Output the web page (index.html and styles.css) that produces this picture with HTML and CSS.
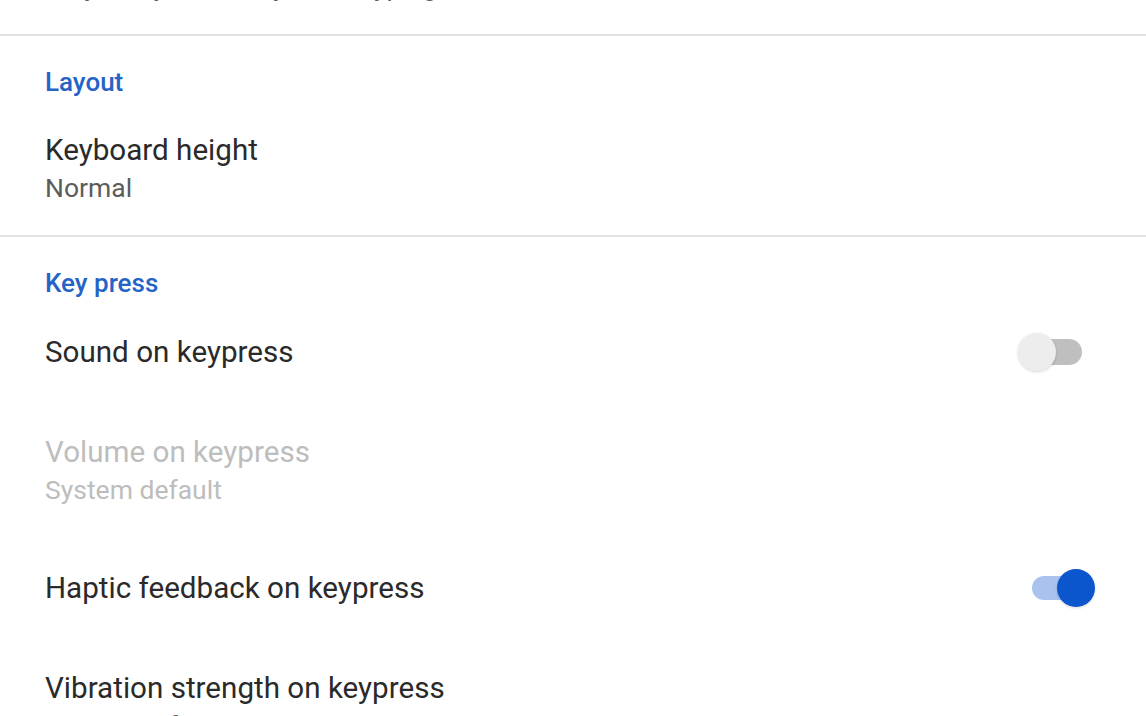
FILE: index.html
```html
<!DOCTYPE html>
<html lang="en">
<head>
<meta charset="utf-8">
<title>Preferences</title>
<link rel="stylesheet" href="styles.css">
</head>
<body>
<div class="screen">
  <div class="item two-line">
    <div class="texts">
      <div class="title">Voice input key</div>
      <div class="summary">Only on symbols keyboard, typing</div>
    </div>
  </div>
  <div class="divider"></div>

  <div class="header">Layout</div>
  <div class="item two-line">
    <div class="texts">
      <div class="title">Keyboard height</div>
      <div class="summary">Normal</div>
    </div>
  </div>
  <div class="divider"></div>

  <div class="header">Key press</div>
  <div class="item">
    <div class="texts">
      <div class="title">Sound on keypress</div>
    </div>
    <div class="switch switch-off"><span class="track"></span><span class="thumb"></span></div>
  </div>
  <div class="item two-line disabled">
    <div class="texts">
      <div class="title">Volume on keypress</div>
      <div class="summary">System default</div>
    </div>
  </div>
  <div class="item">
    <div class="texts">
      <div class="title">Haptic feedback on keypress</div>
    </div>
    <div class="switch switch-on"><span class="track"></span><span class="thumb"></span></div>
  </div>
  <div class="item two-line">
    <div class="texts">
      <div class="title">Vibration strength on keypress</div>
      <div class="summary">System default</div>
    </div>
  </div>
</div>
</body>
</html>
```

FILE: styles.css
```css
html, body {
  margin: 0;
  padding: 0;
  background: #ffffff;
  overflow: hidden;
}

body {
  font-family: Roboto, "Noto Sans", "Liberation Sans", sans-serif;
  width: 1146px;
  height: 716px;
}

.screen {
  display: flex;
  flex-direction: column;
  margin-top: -101px;
}

.divider {
  height: 2px;
  background: #e3e3e3;
  flex: none;
}

.header {
  padding: 28px 0 0 45px;
  font-size: 26px;
  line-height: 36px;
  font-weight: 500;
  color: #2563c7;
}

.item {
  display: flex;
  align-items: center;
  padding: 32px 0 31px 45px;
}

.item.two-line {
  padding-bottom: 29px;
}

.texts {
  flex: 1;
  display: flex;
  flex-direction: column;
  gap: 2px;
}

.title {
  font-size: 29.6px;
  line-height: 36px;
  color: #2a2a2a;
}

.summary {
  font-size: 26.5px;
  line-height: 36px;
  color: #5c5c5c;
}

.disabled .title,
.disabled .summary {
  color: #bdbdbd;
}

.switch {
  position: relative;
  height: 38px;
  flex: none;
}

.switch .track {
  position: absolute;
  border-radius: 13px;
}

.switch .thumb {
  position: absolute;
  top: 0;
  width: 38px;
  height: 38px;
  border-radius: 50%;
}

.switch-off {
  width: 64px;
  margin-right: 64px;
}

.switch-off .track {
  right: 0;
  top: 6px;
  width: 57px;
  height: 26px;
  background: #bfbfbf;
}

.switch-off .thumb {
  left: 0;
  background: #ededed;
  box-shadow: 0 1px 3px rgba(0, 0, 0, 0.16);
}

.switch-on {
  width: 63px;
  margin-right: 51px;
}

.switch-on .track {
  left: 0;
  top: 7px;
  width: 53px;
  height: 24px;
  background: #a9c3ee;
}

.switch-on .thumb {
  right: 0;
  background: #0b55cd;
  box-shadow: 0 1px 3px rgba(0, 0, 0, 0.16);
}
```
